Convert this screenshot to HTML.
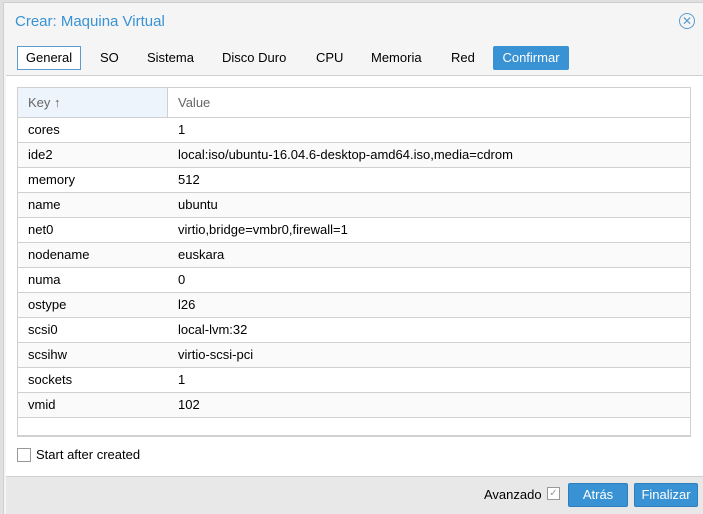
<!DOCTYPE html><html><head><style>
body{margin:0;width:703px;height:513px;background:#e0e0e0;font-family:"Liberation Sans",Arial,sans-serif;font-size:13px;color:#000;position:relative;overflow:hidden}
.win{position:absolute;left:3px;top:2px;width:700px;height:511px;background:#f5f5f5;border-left:1px solid #cfcfcf;border-top:1px solid #cfcfcf}
.title{position:absolute;left:11px;top:10px;font-size:15px;color:#3892d4}
.close{position:absolute;left:675px;top:10px;width:14px;height:14px;border:1px solid #5a9bd0;border-radius:50%;color:#5a9bd0;font-size:12px;line-height:14px;text-align:center}
.tab{position:absolute;top:43px;height:24px;line-height:24px;font-size:13px}
.content{position:absolute;left:2px;top:72px;width:697px;height:400px;background:#fff;border-top:1px solid #d0d0d0;border-bottom:1px solid #d0d0d0}
.grid{position:absolute;left:11px;top:11px;width:672px;height:347px;border:1px solid #d0d0d0;border-bottom:2px solid #d0d0d0;overflow:hidden}
.hdr{height:29px;border-bottom:1px solid #d0d0d0;position:relative;color:#666}
.row{height:24px;border-bottom:1px solid #d0d0d0;position:relative;line-height:24px}
.k{position:absolute;left:10px}.v{position:absolute;left:160px}
.foot{position:absolute;left:2px;top:474px;width:697px;height:37px;background:#e8e8e8}
.btn{position:absolute;top:6px;height:22px;line-height:22px;background:#3892d4;color:#fff;text-align:center;border:1px solid #2f7fbf;border-radius:2px}
</style></head><body>
<div class="win">
<div class="title">Crear: Maquina Virtual</div>
<div class="close">✕</div>
<div class="tab" style="left:13px;width:62px;border:1px solid #5a9bd0;height:22px;line-height:22px;text-align:center;background:#fff">General</div>
<div class="tab" style="left:96px">SO</div>
<div class="tab" style="left:143px">Sistema</div>
<div class="tab" style="left:218px">Disco Duro</div>
<div class="tab" style="left:312px">CPU</div>
<div class="tab" style="left:367px">Memoria</div>
<div class="tab" style="left:447px">Red</div>
<div class="tab" style="left:489px;width:76px;background:#3892d4;color:#fff;text-align:center;border-radius:2px">Confirmar</div>
<div class="content">
<div class="grid">
<div class="hdr"><div style="position:absolute;left:0;top:0;width:149px;height:29px;background:#eef4fb;border-right:1px solid #d0d0d0"></div><span style="position:absolute;left:10px;top:7px">Key ↑</span><span style="position:absolute;left:160px;top:7px">Value</span></div>
<div>
<div class="row" style="background:#fff"><span class="k">cores</span><span class="v">1</span></div>
<div class="row" style="background:#fafafa"><span class="k">ide2</span><span class="v">local:iso/ubuntu-16.04.6-desktop-amd64.iso,media=cdrom</span></div>
<div class="row" style="background:#fff"><span class="k">memory</span><span class="v">512</span></div>
<div class="row" style="background:#fafafa"><span class="k">name</span><span class="v">ubuntu</span></div>
<div class="row" style="background:#fff"><span class="k">net0</span><span class="v">virtio,bridge=vmbr0,firewall=1</span></div>
<div class="row" style="background:#fafafa"><span class="k">nodename</span><span class="v">euskara</span></div>
<div class="row" style="background:#fff"><span class="k">numa</span><span class="v">0</span></div>
<div class="row" style="background:#fafafa"><span class="k">ostype</span><span class="v">l26</span></div>
<div class="row" style="background:#fff"><span class="k">scsi0</span><span class="v">local-lvm:32</span></div>
<div class="row" style="background:#fafafa"><span class="k">scsihw</span><span class="v">virtio-scsi-pci</span></div>
<div class="row" style="background:#fff"><span class="k">sockets</span><span class="v">1</span></div>
<div class="row" style="background:#fafafa"><span class="k">vmid</span><span class="v">102</span></div>
</div></div>
<div style="position:absolute;left:11px;top:372px;width:12px;height:12px;border:1px solid #999;background:#fff"></div>
<div style="position:absolute;left:30px;top:371px">Start after created</div>
</div>
<div class="foot">
<span style="position:absolute;left:478px;top:10px">Avanzado</span>
<div style="position:absolute;left:541px;top:10px;width:11px;height:11px;border:1px solid #999;background:#fff;color:#999;font-size:10px;line-height:11px;text-align:center">✓</div>
<div class="btn" style="left:562px;width:58px">Atrás</div>
<div class="btn" style="left:628px;width:62px">Finalizar</div>
</div>
</div>
</body></html>
